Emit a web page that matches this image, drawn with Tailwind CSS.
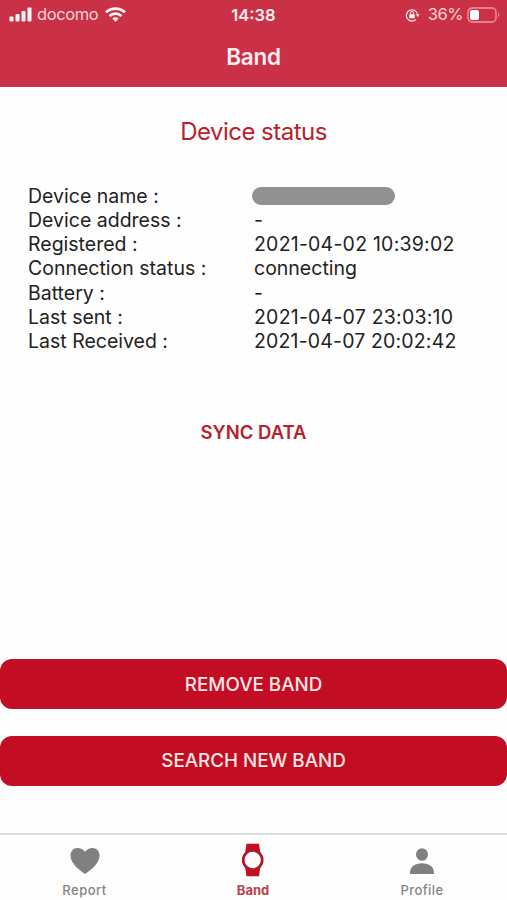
<!DOCTYPE html>
<html lang="en">
<head>
<meta charset="utf-8">
<meta name="viewport" content="width=device-width, initial-scale=1">
<title>Band</title>
<script src="https://cdn.jsdelivr.net/npm/@tailwindcss/browser@4"></script>
</head>
<body class="bg-[#fefefe] font-['Inter','Liberation_Sans',sans-serif]">
<div class="flex h-[900px] w-[507px] flex-col overflow-hidden">
  <header class="h-[87px] shrink-0 bg-[#cb3146] text-[#ffeef0]">
    <div class="grid h-[29px] grid-cols-3 items-center pl-[9px] pr-[7px]">
      <div class="flex items-center">
        <svg class="h-[15px] w-[23px]" viewBox="0 0 23 15" fill="#fff4f4"><rect x="0.5" y="9.5" width="4" height="5" rx="1"/><rect x="6.5" y="7" width="4" height="7.500" rx="1"/><rect x="12.500" y="4" width="4" height="10.500" rx="1"/><rect x="18.500" y="0.500" width="4" height="14" rx="1"/></svg>
        <span class="ml-[5px] text-[16.500px] leading-none tracking-[-0.400px] text-[#fbd5d9]">docomo</span>
        <svg class="ml-[7px] h-[15px] w-[21px]" viewBox="0 0 21 15" fill="none" stroke="#fff4f4" stroke-width="2.700"><path d="M1 5.300C6.300 .3 14.700 .3 20 5.300"/><path d="M4.500 9C8 5.700 13 5.700 16.500 9"/><path d="M7.300 11.600c1.800-1.800 4.600-1.800 6.400 0L10.500 14.800z" fill="#fff4f4" stroke="none"/></svg>
      </div>
      <div class="pr-[2px] pt-px text-center text-[16.500px] font-semibold leading-none">14:38</div>
      <div class="flex items-center justify-end">
        <svg class="h-[14px] w-[15px]" viewBox="0 0 15 14" fill="none" stroke="#fbd9dc" stroke-width="1.300"><path d="M10.800 11.600A5.600 5.600 0 1 1 12.600 7"/><path d="M10.700 6.300h4l-2 3z" fill="#fbd9dc" stroke="none"/><rect x="4.300" y="6.200" width="5.400" height="4" rx=".5" fill="#fff" stroke="none"/><path d="M5.500 6.300V5a1.500 1.500 0 0 1 3 0v1.300" stroke-width="1.100"/></svg>
        <span class="ml-[8px] text-[16.500px] leading-none tracking-[-0.500px] text-[#fbd5d9]">36%</span>
        <svg class="ml-[4px] h-[16px] w-[33px]" viewBox="0 0 33 16" fill="none"><rect x="1" y="1" width="28" height="14" rx="4" stroke="#ea9aa5" stroke-width="1.300"/><rect x="3" y="3" width="9" height="10" rx="2" fill="#fff"/><path d="M31 5.500c1.700.8 1.700 4.200 0 5z" fill="#e28391"/></svg>
      </div>
    </div>
    <h1 class="mt-[12px] text-center text-[22.500px] font-semibold leading-[32px] tracking-[-0.3px]">Band</h1>
  </header>
  <main class="flex flex-1 flex-col">
    <h2 class="mt-[29px] text-center text-[24px] leading-[32px] tracking-[-0.520px] text-[#b91f2d]">Device status</h2>
    <dl class="mt-[35.500px] grid grid-cols-[226px_1fr] pl-[28px] text-[19.500px] leading-[24.300px] text-[#222]">
      <dt>Device name :</dt><dd class="flex items-center"><span class="ml-[-2px] h-[18px] w-[143px] rounded-full bg-[#909090]"></span></dd>
      <dt>Device address :</dt><dd>-</dd>
      <dt>Registered :</dt><dd class="tracking-[0.220px]">2021-04-02 10:39:02</dd>
      <dt>Connection status :</dt><dd>connecting</dd>
      <dt>Battery :</dt><dd>-</dd>
      <dt>Last sent :</dt><dd class="tracking-[0.220px]">2021-04-07 23:03:10</dd>
      <dt>Last Received :</dt><dd class="tracking-[0.160px]">2021-04-07 20:02:42</dd>
    </dl>
    <button class="mt-[66.400px] self-center text-[18.500px] font-semibold leading-[24px] text-[#b91f2d]">SYNC DATA</button>
    <div class="mt-auto mb-[47px] flex flex-col gap-[27px]">
      <button class="h-[50px] rounded-[12px] bg-[#c20d22] pt-[2px] text-[18.800px] font-medium text-[#ffe6e6]">REMOVE BAND</button>
      <button class="h-[50px] rounded-[12px] bg-[#c20d22] pt-px text-[18.800px] font-medium text-[#ffe6e6]">SEARCH NEW BAND</button>
    </div>
  </main>
  <nav class="grid h-[67px] shrink-0 grid-cols-3 border-t-2 border-[#dcdcdc] text-[13px] font-medium leading-[16px] text-[#858585]">
    <div class="flex flex-col items-center pt-[8px]">
      <svg class="h-[34px] w-[34px]" viewBox="0 0 34 34" fill="#808080"><path d="M17 31C14 28.500 2.500 22 2.500 12.500C2.500 8 5.500 5 9.500 5c3 0 6 1.300 7.500 3.800C18.500 6.300 21.500 5 24.500 5c4 0 7 3 7 7.500C31.500 22 20 28.500 17 31z"/></svg>
      <span class="mt-[5px] tracking-[0.500px]">Report</span>
    </div>
    <div class="flex flex-col items-center pr-px pt-[8px] text-[#b9404f]">
      <svg class="h-[34px] w-[34px]" viewBox="0 0 34 34"><path d="M10.500 .700h12.500l1.500 10H9zM9 23h15.500l-1.500 10.300H10.500z" fill="#c20d22"/><circle cx="16.700" cy="17" r="9.500" fill="#fefefe" stroke="#b5162a" stroke-width="2.700"/></svg>
      <span class="mt-[5px] font-bold">Band</span>
    </div>
    <div class="flex flex-col items-center pt-[8px] pr-[1px]">
      <svg class="h-[34px] w-[34px]" viewBox="0 0 34 34" fill="#808080"><ellipse cx="17" cy="11.500" rx="6" ry="6.300"/><path d="M5 31v-1.500C5 24 10 20.300 17 20.300S29 24 29 29.500V31z"/></svg>
      <span class="mt-[5px] tracking-[0.400px]">Profile</span>
    </div>
  </nav>
</div>
</body>
</html>
